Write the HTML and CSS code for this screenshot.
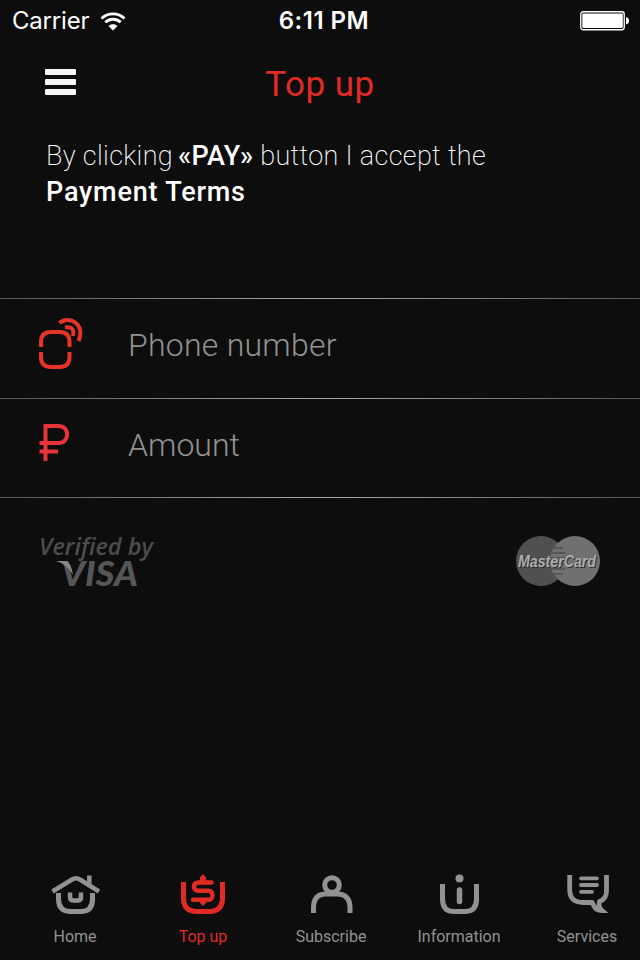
FILE: index.html
```html
<!DOCTYPE html>
<html lang="en">
  <head>
    <meta charset="UTF-8" />
    <meta name="viewport" content="width=device-width, initial-scale=1.0" />
    <title>Top up</title>
    <link rel="stylesheet" href="styles.css">
  </head>
  <body>
    <div class="screen">
      <div class="status-bar">
        <div class="carrier">
          <span>Carrier</span>
          <svg width="26" height="19" viewBox="0 0 26 19">
            <path d="M1.500 6.500C8 .3 18 .3 24.500 6.500M5.300 10.300C9.700 6.200 16.300 6.200 20.700 10.300" fill="none" stroke="#fff" stroke-width="2.800" />
            <path d="M8.500 14C11 11.600 15 11.600 17.500 14L13 18.500Z" fill="#fff" />
          </svg>
        </div>
        <span class="time">6:11 PM</span>
        <svg class="battery" width="50" height="20" viewBox="0 0 50 20">
          <rect x=".75" y=".75" width="43.500" height="18" rx="2.500" fill="none" stroke="#fff" stroke-width="1.300" />
          <rect x="2.300" y="2.500" width="40.500" height="14.500" rx="1" fill="#fff" />
          <path d="M46 6.300Q49 6.500 49 9.800T46 13.200Z" fill="#fff" />
        </svg>
      </div>

      <header class="header">
        <button class="menu" aria-label="Menu"><i></i><i></i><i></i></button>
        <h1>Top up</h1>
      </header>

      <p class="terms">
        <span class="terms-line">By clicking <b>«PAY»</b> button I accept the</span>
        <b class="terms-link">Payment Terms</b>
      </p>

      <div class="fields">
        <div class="field">
          <svg width="46" height="54" viewBox="0 0 46 54" fill="none" stroke="#e73428" stroke-width="4">
            <path d="M3 30V25Q3 15 13 15H21.500Q31.500 15 31.500 25V30M3 35V40Q3 50 13 50H21.500Q31.500 50 31.500 40V35" />
            <path d="M21.500 6C31-2 48 7 40.500 24M27 10.500Q37 8.500 35 19" />
          </svg>
          <label class="phone-label">Phone number</label>
        </div>
        <div class="field">
          <svg width="46" height="54" viewBox="0 0 46 54" fill="none" stroke="#e73439" stroke-width="4">
            <path d="M7.500 47V12H20.500C32 12 32 29 20.500 29H1.500M1.500 37.500H20" />
          </svg>
          <label class="amount-label">Amount</label>
        </div>
      </div>

      <div class="cards">
        <svg width="120" height="60" viewBox="0 0 120 60">
          <text class="verified" x="2" y="25" textLength="114" lengthAdjust="spacingAndGlyphs">Verified by</text>
          <text class="visa" x="24" y="56" textLength="77" lengthAdjust="spacingAndGlyphs">VISA</text>
          <path d="M19 31H29Q34 32 36 45Q30 34 19 31Z" fill="#898989" />
        </svg>
        <svg width="86" height="52" viewBox="0 0 86 52">
          <circle cx="26" cy="26" r="25" fill="#505050" />
          <circle cx="60" cy="26" r="25" fill="#707070" />
          <path d="M39 13H48M36 18H50M35 23H51M35 29H51M36 34H50M39 39H48" stroke="#575757" stroke-width="2" />
          <text class="mastercard mastercard-shadow" x="4" y="33" textLength="78" lengthAdjust="spacingAndGlyphs">MasterCard</text>
          <text class="mastercard" x="3" y="32" textLength="78" lengthAdjust="spacingAndGlyphs">MasterCard</text>
        </svg>
      </div>

      <nav class="tabs">
        <a class="tab tab-home">
          <svg width="52" height="44" viewBox="0 0 52 44" fill="none" stroke="currentColor" stroke-width="5">
            <path d="M3.500 17.500L23 5.500Q27 3 31 5.500L50 17.500" stroke-width="4.500" />
            <path d="M9.500 19V25Q9.500 37.500 22 37.500H32Q43.500 37.500 43.500 25V19" />
            <path d="M21 18.500V23Q21 26.500 24.500 26.500H28.500Q32 26.500 32 23V18.500" stroke-width="4.500" />
            <path d="M40.300 1.500V11" stroke-width="4.500" />
          </svg>
          <span>Home</span>
        </a>
        <a class="tab tab-topup active">
          <svg width="52" height="44" viewBox="0 0 52 44" fill="none" stroke="currentColor" stroke-width="5">
            <path d="M6.500 8V24Q6.500 37.500 20 37.500H32Q45.500 37.500 45.500 24V8" />
            <path d="M34.500 8.500H21.500Q17 8.500 17 12.500T21.500 16.700H31Q35.500 16.700 35.500 21.300T31 25.800H16" stroke-width="4.400" stroke-linecap="round" />
            <path d="M26 0L29 3.500V8H23V3.500ZM23 26H29V29L26 32L23 29Z" fill="currentColor" stroke="none" />
          </svg>
          <span>Top up</span>
        </a>
        <a class="tab tab-subscribe">
          <svg width="52" height="44" viewBox="0 0 52 44" fill="none" stroke="currentColor" stroke-width="5">
            <circle cx="27" cy="11" r="7.300" />
            <path d="M8.500 39V34Q8.500 20 21 20H32Q45 20 45 34V39" />
          </svg>
          <span>Subscribe</span>
        </a>
        <a class="tab tab-information">
          <svg width="52" height="44" viewBox="0 0 52 44" fill="none" stroke="currentColor" stroke-width="5">
            <path d="M9.500 10V25Q9.500 37.500 21 37.500H32Q43.500 37.500 43.500 25V10" />
            <path d="M26.500 16V27.500" stroke-width="5.500" stroke-linecap="round" />
            <circle cx="26.500" cy="4.500" r="4" fill="currentColor" stroke="none" />
          </svg>
          <span>Information</span>
        </a>
        <a class="tab tab-services">
          <svg width="52" height="44" viewBox="0 0 52 44" fill="none" stroke="currentColor" stroke-width="4.800">
            <path d="M8.700 1V16Q8.700 28.500 22 28.500H31L33 32Q35 36.500 41 36.500Q37 33 38.500 27.500Q45.500 25 45.500 17V1" />
            <path d="M20 4.300H36M20 11H36M20 17.800H31" stroke-width="3.800" stroke-linecap="round" />
          </svg>
          <span>Services</span>
        </a>
      </nav>
    </div>
  </body>
</html>
```
FILE: styles.css
```css
* {
  box-sizing: border-box;
}

body {
  margin: 0;
  background-color: #0d0d0d;
  color: #fff;
  font-family: Roboto, "Noto Sans", sans-serif;
}

.screen {
  width: 640px;
  height: 960px;
  display: flex;
  flex-direction: column;
  overflow: hidden;
}

.status-bar {
  height: 40px;
  display: grid;
  grid-template-columns: 1fr auto 1fr;
  align-items: center;
  padding: 1px 10px 0 12px;
  font: 24px/40px Inter, sans-serif;
}

.carrier {
  display: flex;
  align-items: center;
  gap: 11px;
  letter-spacing: -0.2px;
}

.time {
  padding-left: 6px;
  font-weight: 600;
  font-size: 24px;
  letter-spacing: 0.5px;
}

.battery {
  justify-self: end;
}

.header {
  height: 90px;
  display: grid;
  grid-template-columns: 80px 1fr 80px;
  align-items: start;
}

.menu {
  display: flex;
  flex-direction: column;
  gap: 4px;
  width: 32px;
  margin: 29px 0 0 45px;
  padding: 0;
  border: none;
  background: none;
}

.menu i {
  height: 6px;
  width: 31px;
  border-radius: 1px;
  background-color: #f5f5f5;
}

h1 {
  margin: 23px 0 0;
  text-align: center;
  color: #e02b25;
  font-size: 35px;
  line-height: 44px;
  font-weight: 400;
  letter-spacing: 0.5px;
}

.terms {
  height: 168px;
  margin: 0;
  padding: 8px 0 0 46px;
  font-size: 27px;
  line-height: 36px;
  font-weight: 200;
  white-space: nowrap;
}

.terms-line,
.terms-link {
  display: block;
}

.terms-line {
  letter-spacing: 0.35px;
}

.terms b {
  font-weight: 500;
}

.terms-line b {
  margin-left: -2px;
}

.terms .terms-link {
  letter-spacing: 0.8px;
}

/* the gradient shows through as the 1px row lines */
.fields {
  display: flow-root;
  padding-top: 1px;
  background: linear-gradient(90deg, #555, #aaa 50%, #555);
}

.field {
  height: 99px;
  display: flex;
  align-items: flex-start;
  gap: 44px;
  margin-bottom: 1px;
  padding: 16px 0 0 38px;
  background-color: #0d0d0d;
  color: #929292;
  font-size: 32px;
  line-height: 60px;
  font-weight: 300;
}

.field + .field {
  height: 98px;
}

.field svg {
  margin-top: 2px;
}

.field + .field svg {
  margin-top: -1px;
}

.phone-label {
  letter-spacing: 0.25px;
}

.cards {
  display: flex;
  justify-content: space-between;
  padding: 32px 39px 0 37px;
}

.cards svg {
  margin-top: 5px;
}

.cards svg:first-child {
  margin-top: 0;
}

.verified {
  font: italic 600 24px "Open Sans", sans-serif;
  fill: #4c4c4c;
}

.visa {
  font: italic 900 34px Lato, sans-serif;
  fill: #565656;
}

.mastercard {
  font: italic 700 17px "Liberation Sans", sans-serif;
  fill: #adadad;
}

.mastercard-shadow {
  fill: #303030;
}

.tabs {
  display: flex;
  margin-top: auto;
  height: 86px;
  padding-left: 11px;
}

.tab {
  flex: 0 0 128px;
  display: flex;
  flex-direction: column;
  align-items: center;
  color: #929292;
  font-size: 16px;
  line-height: 22px;
}

.tab svg {
  flex: none;
}

.tab span {
  margin-top: 8px;
}

.tab.active {
  color: #e02b25;
}
```
